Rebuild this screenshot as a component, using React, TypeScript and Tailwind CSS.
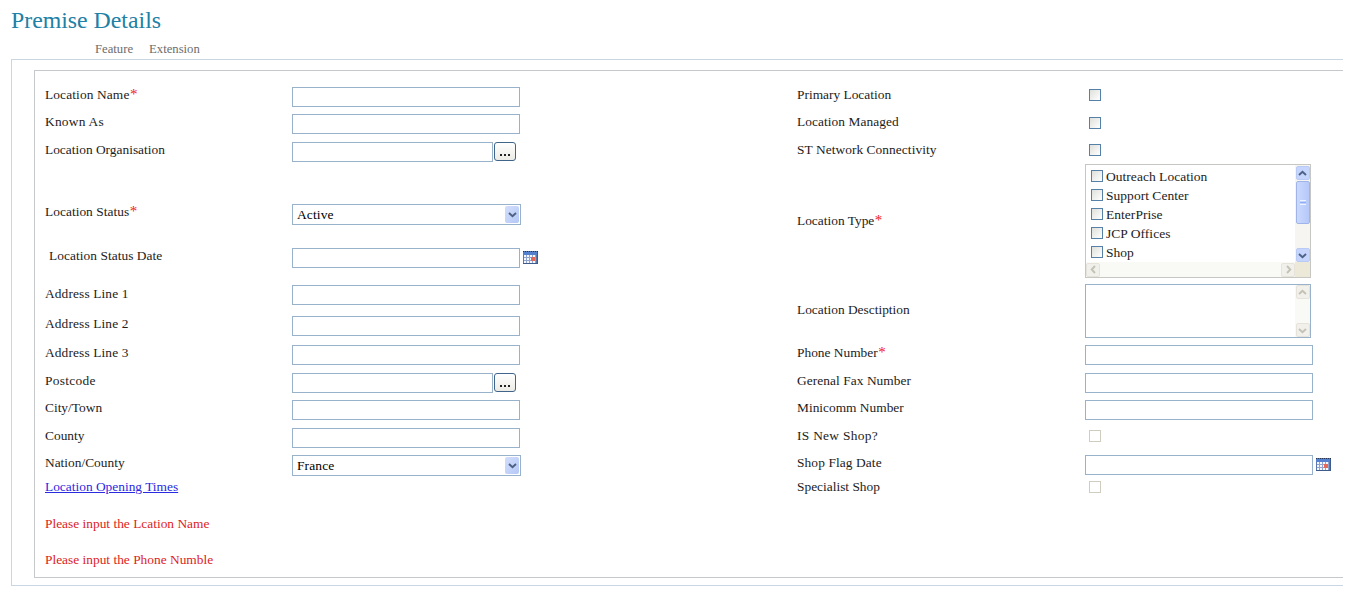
import type { ReactNode } from "react";

const Box = ({ cls = "w-[228px]" }: { cls?: string }) => (
  <input type="text" className={`block h-5 shrink-0 border border-[#98b2cb] bg-white px-1 outline-none ${cls}`} />
);

const Check = ({ cls = "", disabled = false }: { cls?: string; disabled?: boolean }) => (
  <span
    className={`block size-3 shrink-0 border ${
      disabled ? "border-[#cfcdc0] bg-white" : "border-[#5580a8] bg-linear-to-br from-[#dfdfdb] to-white"
    } ${cls}`}
  />
);

const Chevron = ({ dir, color }: { dir: "up" | "down" | "left" | "right"; color: string }) => {
  const d = {
    up: "M1 6 4.5 2.7 8 6",
    down: "M1 3 4.5 6.3 8 3",
    left: "M6 1 2.7 4.5 6 8",
    right: "M3 1 6.3 4.5 3 8",
  }[dir];
  return (
    <svg width="9" height="9" viewBox="0 0 9 9" fill="none" stroke={color} strokeWidth="1.9">
      <path d={d} />
    </svg>
  );
};

const Select = ({ value }: { value: string }) => (
  <div className="flex h-[21px] w-[229px] justify-between border border-[#98b2cb] bg-white p-px">
    <span className="pl-[3px] pt-px text-[13.5px] leading-4 tracking-[0.1px] text-black">{value}</span>
    <span className="flex h-[17px] w-[14px] items-center justify-center rounded-[2px] bg-linear-to-br from-[#d3defc] to-[#b4c8f6]">
      <Chevron dir="down" color="#4d6185" />
    </span>
  </div>
);

const Lookup = () => (
  <div className="flex gap-px">
    <Box cls="w-[201px]" />
    <button className="flex h-[19px] w-[22px] items-end justify-center gap-[2px] rounded-[3px] border border-[#40658b] bg-linear-to-b from-white to-[#ecebe5] pb-[4px]">
      <i className="size-[2px] bg-[#222]" />
      <i className="size-[2px] bg-[#222]" />
      <i className="size-[2px] bg-[#222]" />
    </button>
  </div>
);

const Calendar = () => (
  <svg width="15" height="14" viewBox="0 0 15 14" className="shrink-0" shapeRendering="crispEdges">
    <rect width="15" height="13" fill="#5b78ad" />
    <path d="M0 .5h15" stroke="#2a3552" strokeDasharray="1 1" />
    <rect x="0" y="1" width="15" height="3" fill="#5480d0" />
    <path d="M1 4h12v8H1z" fill="#f4f7fd" />
    <path d="M3.5 4v8M6.5 4v8M9.5 4v8M12.5 4v8M1 6.5h12M1 9.5h12" stroke="#8fa5d0" />
    <rect x="8" y="6" width="4" height="4" fill="#e36a58" />
    <path d="M0 12.5h15M14.5 1v12" stroke="#3d5c8c" />
  </svg>
);

const DateBox = () => (
  <div className="flex gap-[3px]">
    <Box />
    <span className="pt-[3px]">
      <Calendar />
    </span>
  </div>
);

const ScrollButton = ({ dir, off = false }: { dir: "up" | "down" | "left" | "right"; off?: boolean }) => (
  <span
    className={`flex size-[14px] shrink-0 items-center justify-center rounded-[2px] border ${
      off ? "border-[#e6e4da] bg-[#f1f0ea]" : "border-[#b9cbf5] bg-[#c5d5fd]"
    }`}
  >
    <Chevron dir={dir} color={off ? "#c4c2b6" : "#4d6185"} />
  </span>
);

const types = ["Outreach Location", "Support Center", "EnterPrise", "JCP Offices", "Shop"];

const TypeList = () => (
  <div className="grid h-[114px] w-[226px] grid-cols-[209px_15px] grid-rows-[97px_15px] border border-[#c6c6c3] bg-white">
    <div className="flex flex-col overflow-hidden pl-[5px] pt-[3px]">
      {types.map((t) => (
        <label key={t} className="flex h-[19px] shrink-0 items-start gap-[3px]">
          <Check cls="mt-[2px]" />
          <span className="text-[13.5px] leading-[17px] tracking-[0.03px]">{t}</span>
        </label>
      ))}
    </div>
    <div className="flex flex-col items-center bg-[#f6f5f1] pt-px">
      <ScrollButton dir="up" />
      <span className="mt-px flex h-[43px] w-[14px] flex-col items-center justify-center gap-px rounded-[2px] border border-[#9fb5ea] bg-linear-to-r from-[#cbd9fe] to-[#b5c8f8]">
        <i className="h-px w-[6px] bg-[#eef4fe]" />
        <i className="h-px w-[6px] bg-[#8cb0f8]" />
        <i className="h-px w-[6px] bg-[#eef4fe]" />
      </span>
      <span className="grow" />
      <ScrollButton dir="down" />
    </div>
    <div className="flex items-center justify-between bg-[#f9f9f6]">
      <ScrollButton dir="left" off />
      <ScrollButton dir="right" off />
    </div>
    <div className="bg-[#ece9d8]" />
  </div>
);

const Description = () => (
  <div className="flex h-[54px] w-[226px] justify-end border border-[#98b2cb] bg-white">
    <div className="flex w-[15px] flex-col items-center justify-between bg-[#f9f9f6]">
      <ScrollButton dir="up" off />
      <ScrollButton dir="down" off />
    </div>
  </div>
);

type RowData = { label: string; req?: boolean; h: string; lab?: string; ctl?: string; node?: ReactNode };

const left: RowData[] = [
  { label: "Location Name", req: true, h: "h-[27px]", lab: "pt-[3px] tracking-[0.12px]", node: <Box /> },
  { label: "Known As", h: "h-[28px]", lab: "pt-[3px] tracking-[0.25px]", node: <Box /> },
  { label: "Location Organisation", h: "h-[62px]", node: <Lookup /> },
  { label: "Location Status", req: true, h: "h-[44px]", lab: "pt-[3px] tracking-[0.03px]", node: <Select value="Active" /> },
  { label: "Location Status Date", h: "h-[37px]", lab: "pt-[3px] pl-1 tracking-[0.05px]", node: <DateBox /> },
  { label: "Address Line 1", h: "h-[31px]", lab: "pt-1 tracking-[0.12px]", node: <Box /> },
  { label: "Address Line 2", h: "h-[29px]", lab: "pt-[3px] tracking-[0.12px]", node: <Box /> },
  { label: "Address Line 3", h: "h-[28px]", lab: "pt-[3px] tracking-[0.12px]", node: <Box /> },
  { label: "Postcode", h: "h-[27px]", lab: "pt-[3px] tracking-[0.3px]", node: <Lookup /> },
  { label: "City/Town", h: "h-[28px]", node: <Box /> },
  { label: "County", h: "h-[27px]", node: <Box /> },
  { label: "Nation/County", h: "h-[26px]", node: <Select value="France" /> },
];

const right: RowData[] = [
  { label: "Primary Location", h: "h-[27px]", lab: "pt-[3px]", ctl: "pt-[5px] pl-1", node: <Check /> },
  { label: "Location Managed", h: "h-[28px]", lab: "pt-[3px] tracking-[0.06px]", ctl: "pt-[6px] pl-1", node: <Check /> },
  { label: "ST Network Connectivity", h: "h-[22px]", lab: "pt-[3px] tracking-[0.06px]", ctl: "pt-[5px] pl-1", node: <Check /> },
  { label: "Location Type", req: true, h: "h-[120px]", lab: "pt-[52px]", node: <TypeList /> },
  { label: "Location Desctiption", h: "h-[61px]", lab: "pt-[21px]", node: <Description /> },
  { label: "Phone Number", req: true, h: "h-[28px]", node: <Box /> },
  { label: "Gerenal Fax Number", h: "h-[27px]", lab: "pt-[3px] tracking-[0.06px]", node: <Box /> },
  { label: "Minicomm Number", h: "h-[28px]", node: <Box /> },
  { label: "IS New Shop?", h: "h-[27px]", lab: "pt-[3px] tracking-[0.3px]", ctl: "pt-[5px] pl-1", node: <Check disabled /> },
  { label: "Shop Flag Date", h: "h-[26px]", lab: "pt-[3px] tracking-[0.1px]", node: <DateBox /> },
  { label: "Specialist Shop", h: "h-[26px]", lab: "pt-px", ctl: "pt-[3px] pl-1", node: <Check disabled /> },
];

const Row = ({ row, width }: { row: RowData; width: string }) => (
  <div className={`flex items-start ${row.h}`}>
    <div className={`shrink-0 whitespace-nowrap ${width} ${row.lab ?? "pt-[3px]"}`}>
      {row.label}
      {row.req && <span className="pl-[0.5px] text-[15px] leading-none text-[#f01818]">*</span>}
    </div>
    <div className={row.ctl ?? "pt-[3px]"}>{row.node}</div>
  </div>
);

export default function App() {
  return (
    <div className="h-[601px] w-[1357px] overflow-hidden bg-white pl-[11px] font-['Liberation_Serif',serif] text-[13.4px] leading-4 text-[#1c1c1c]">
      <h1 className="h-[41px] pt-[6px] text-[23.8px] leading-7 text-[#2180a5]">Premise Details</h1>
      <nav className="flex h-[18px] gap-[16px] pl-[84px] text-[12.7px] leading-4 text-[#6c6c6c]">
        <span>Feature</span>
        <span>Extension</span>
      </nav>
      <main className="h-[527px] w-[1332px] border-y border-l border-[#c9d6e3] pl-[22px] pt-[10px]">
        <section className="flex h-[508px] border-y border-l border-[#c6c8ca] pl-[10px] pt-[13px]">
          <div className="w-[752px] shrink-0">
            {left.map((r) => (
              <Row key={r.label} row={r} width="w-[247px]" />
            ))}
            <a href="#" className="block h-[37px] pt-px text-[#2a2ae0] underline">
              Location Opening Times
            </a>
            <p className="h-9 pt-px text-[#e01c1c]">Please input the Lcation Name</p>
            <p className="pt-px text-[#e01c1c]">Please input the Phone Numble</p>
          </div>
          <div>
            {right.map((r) => (
              <Row key={r.label} row={r} width="w-[288px]" />
            ))}
          </div>
        </section>
      </main>
    </div>
  );
}
